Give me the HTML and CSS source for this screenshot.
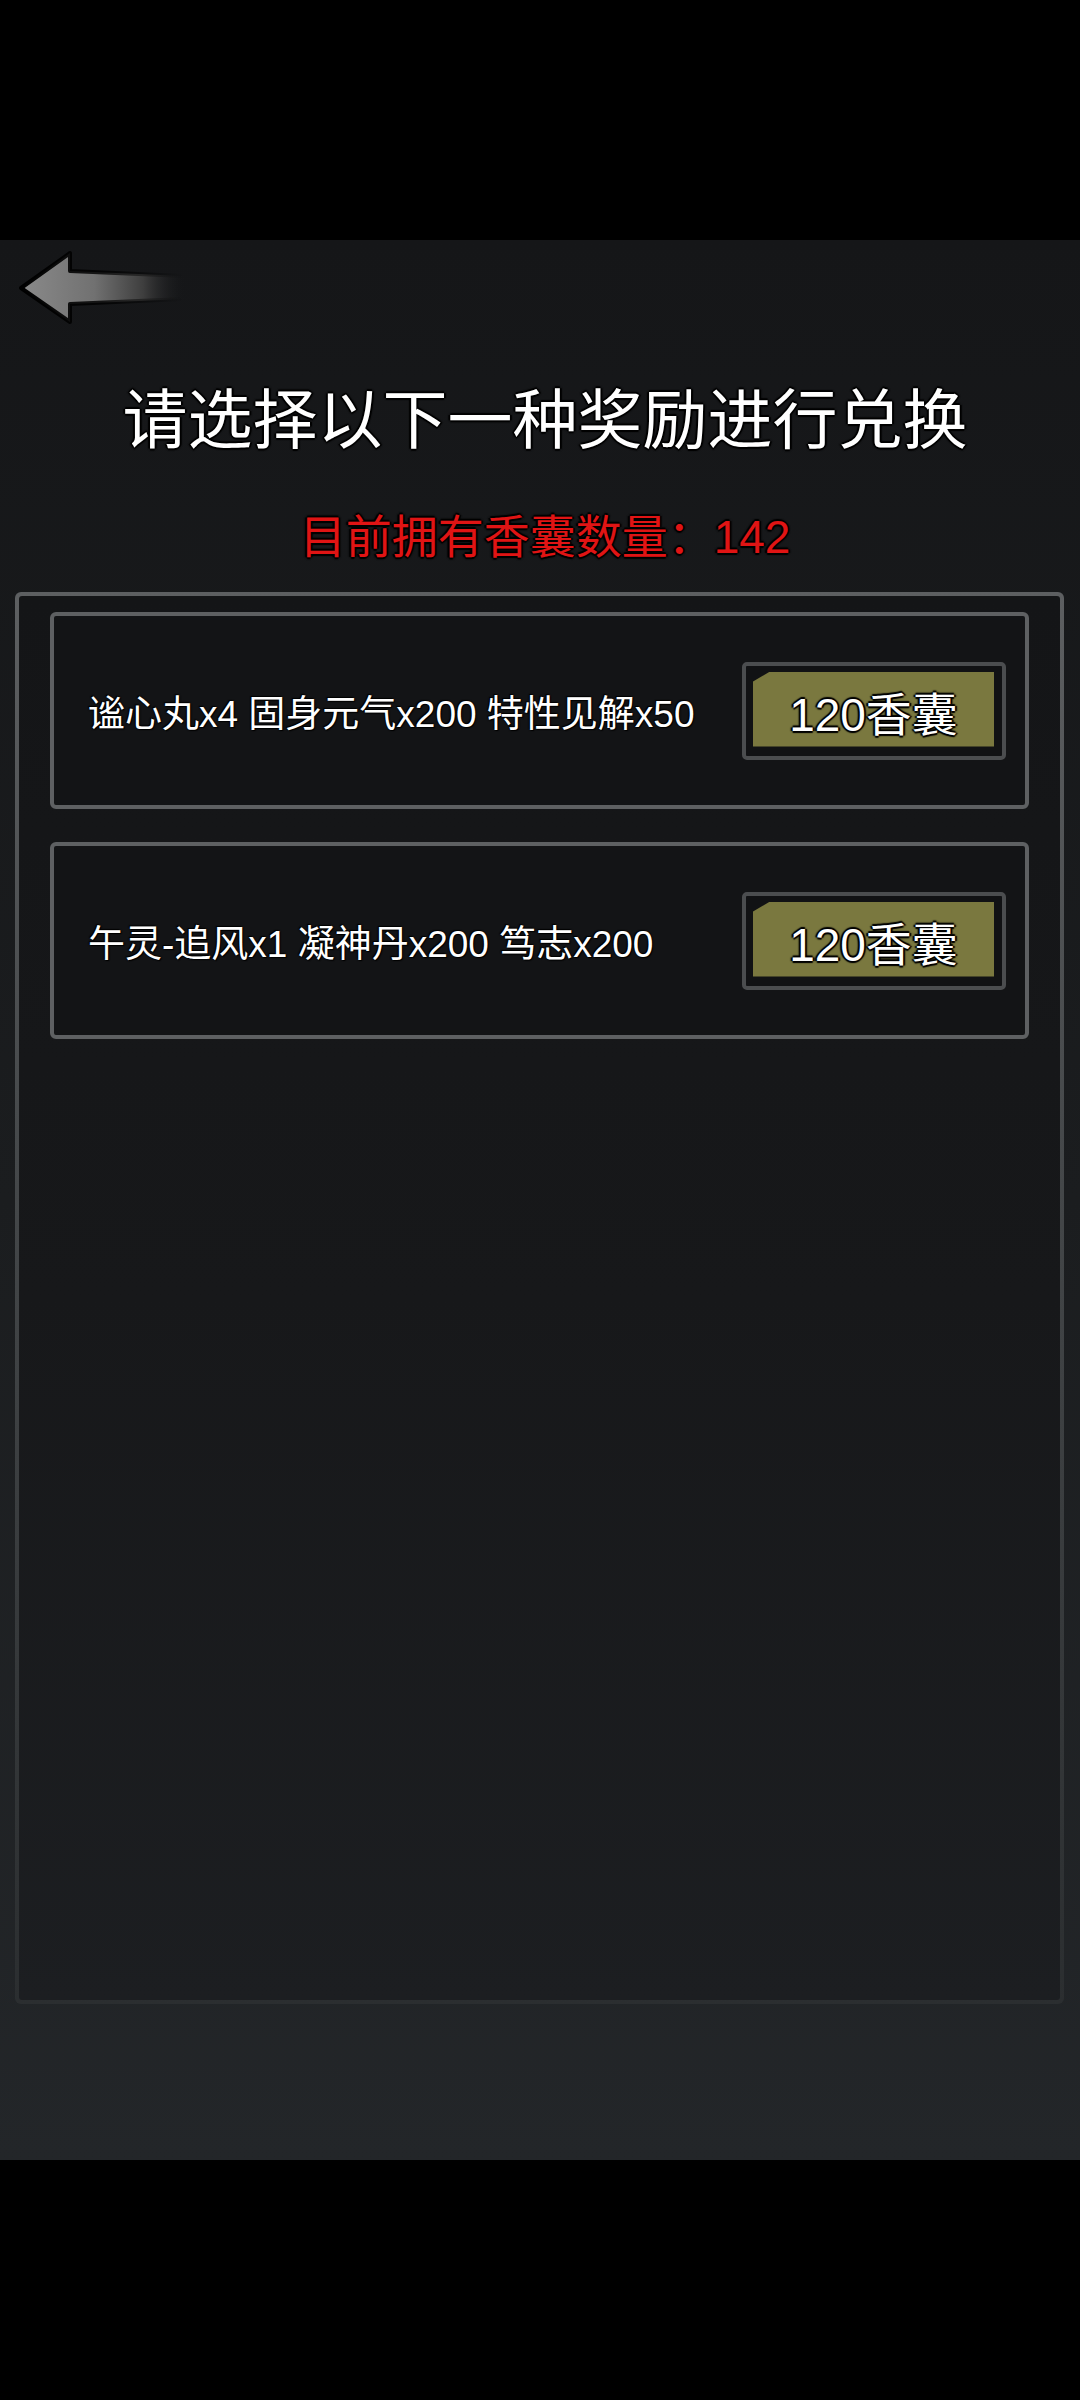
FILE: index.html
```html
<!DOCTYPE html>
<html lang="zh-CN">
<head>
    <meta charset="UTF-8">
    <title>香囊兑换</title>
    <link rel="stylesheet" href="styles.css">
</head>
<body>
    <div class="screen">
        <div class="statusbar"></div>

        <div class="main">
            <div class="header">
                <svg class="back" width="200" height="100" viewBox="0 0 200 100">
                    <defs>
                        <linearGradient id="arrowFill" x1="21" y1="0" x2="184" y2="0" gradientUnits="userSpaceOnUse">
                            <stop offset="0" stop-color="#8a8a8a"/>
                            <stop offset="0.45" stop-color="#717171"/>
                            <stop offset="0.75" stop-color="#3e3e3e"/>
                            <stop offset="1" stop-color="#1a1b1d" stop-opacity="0"/>
                        </linearGradient>
                        <linearGradient id="arrowEdge" x1="21" y1="0" x2="184" y2="0" gradientUnits="userSpaceOnUse">
                            <stop offset="0" stop-color="#000"/>
                            <stop offset="0.5" stop-color="#000" stop-opacity="0.8"/>
                            <stop offset="1" stop-color="#000" stop-opacity="0"/>
                        </linearGradient>
                    </defs>
                    <path d="M21 48 L70 13 L70 31 L184 36 L184 59 L70 64 L70 82 Z"
                          fill="url(#arrowFill)" stroke="url(#arrowEdge)" stroke-width="4" stroke-linejoin="round"/>
                </svg>
            </div>

            <h1 class="title">请选择以下一种奖励进行兑换</h1>
            <p class="count">目前拥有香囊数量：142</p>

            <div class="panel">
                <div class="panel-inner">
                    <div class="card">
                        <span class="reward">谧心丸x4 固身元气x200 特性见解x50</span>
                        <button class="price"><span class="price-face">120香囊</span></button>
                    </div>
                    <div class="card">
                        <span class="reward">午灵-追风x1 凝神丹x200 笃志x200</span>
                        <button class="price"><span class="price-face">120香囊</span></button>
                    </div>
                </div>
            </div>
        </div>

        <div class="navbar"></div>
    </div>
</body>
</html>
```

FILE: styles.css
```css
body{
    margin: 0;
    background: #000;
    font-family: "Liberation Sans", "Noto Sans CJK SC", sans-serif;
}

.screen{
    width: 1080px;
    height: 2400px;
    display: flex;
    flex-direction: column;
}

.statusbar,
.navbar{
    height: 240px;
    background: #000;
    flex-shrink: 0;
}

.main{
    height: 1920px;
    display: flex;
    flex-direction: column;
    background: linear-gradient(#151618, #1b1d1f 50%, #232629);
}

.header{
    height: 100px;
}
.back{
    display: block;
}

.title{
    margin: 36px 0 0;
    padding-left: 10px;
    font-family: "Noto Sans CJK SC", sans-serif;
    font-size: 65px;
    font-weight: 400;
    line-height: 78px;
    height: 78px;
    text-align: center;
    color: #fff;
    text-shadow: 0 0 3px #000, 2px 0 1px #000, -2px 0 1px #000, 0 2px 1px #000, 0 -2px 1px #000;
}

.count{
    margin: 56px 0 0;
    padding-left: 10px;
    font-size: 46px;
    line-height: 54px;
    height: 54px;
    text-align: center;
    color: #e01414;
    text-shadow: 0 0 3px #000, 2px 0 1px #000, -2px 0 1px #000, 0 2px 1px #000, 0 -2px 1px #000;
}

.panel{
    margin: 28px 16px 0 15px;
    height: 1412px;
    padding: 4px;
    border-radius: 6px;
    background: linear-gradient(#5d5f61, #45484a 40%, #2b2e30);
    box-sizing: border-box;
}
.panel-inner{
    height: 100%;
    box-sizing: border-box;
    padding: 16px 31px;
    border-radius: 3px;
    background: linear-gradient(#141517, #17181a 50%, #1c1e21);
    display: flex;
    flex-direction: column;
    gap: 33px;
}

.card{
    height: 197px;
    box-sizing: border-box;
    border: 4px solid #5e6062;
    border-radius: 6px;
    background: #131416;
    padding: 0 19px 0 34px;
    display: flex;
    align-items: center;
    justify-content: space-between;
}

.reward{
    font-size: 37px;
    color: #fff;
    text-shadow: 0 0 2px #000, 1px 1px 1px #000, -1px -1px 1px #000;
}

.price{
    width: 264px;
    height: 98px;
    box-sizing: border-box;
    border: 4px solid #4b4d4f;
    border-radius: 5px;
    background: #111214;
    padding: 6px 8px 9px 7px;
    margin: 0;
    font-family: inherit;
}
.price-face{
    display: flex;
    align-items: center;
    justify-content: center;
    height: 100%;
    background: #7a783f;
    clip-path: polygon(17px 0, 100% 0, 100% 100%, 0 100%, 0 10px);
    font-size: 46px;
    color: #fff;
    padding-top: 4px;
    box-sizing: border-box;
    text-shadow: 0 0 3px #000, 2px 0 1px #000, -2px 0 1px #000, 0 2px 1px #000, 0 -2px 1px #000;
}
```
